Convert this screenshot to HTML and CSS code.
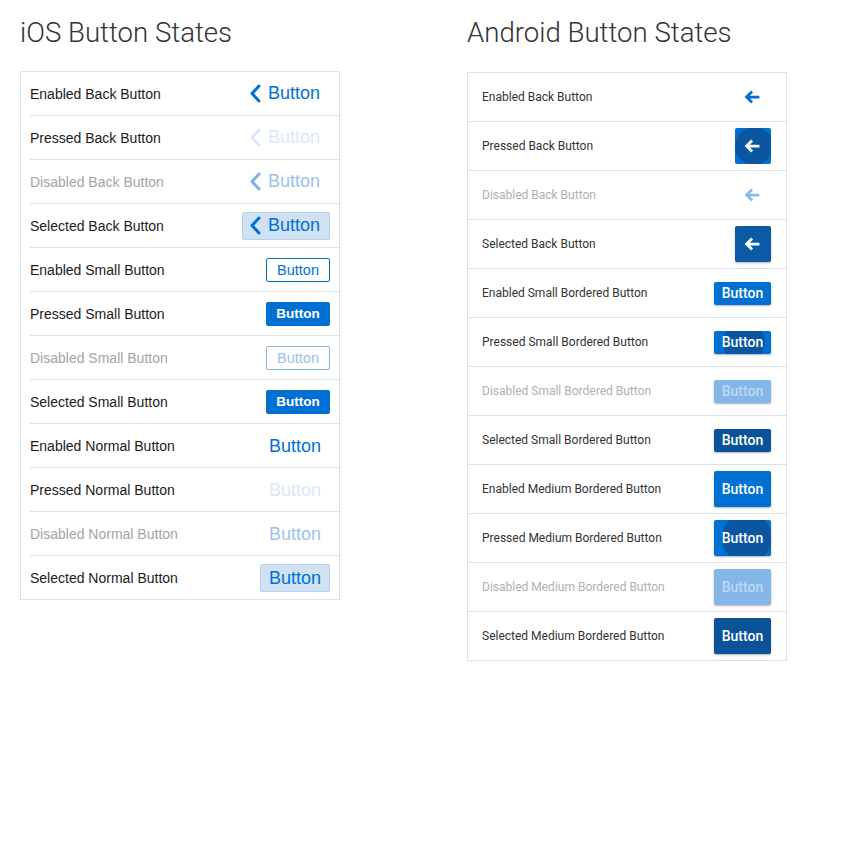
FILE: index.html
```html
<!DOCTYPE html>
<html lang="en">
<head>
    <meta charset="UTF-8">
    <title>Button States</title>
    <link rel="stylesheet" href="styles.css">
</head>
<body>
    <div class="page">

        <!-- iOS -->
        <section class="col ios">
            <h1>iOS Button States</h1>
            <div class="list">
                <div class="row"><span class="label">Enabled Back Button</span>
                    <span class="ios-back"><svg viewBox="0 0 13 19"><polyline points="10,2 3,9.5 10,17"/></svg>Button</span></div>
                <div class="row"><span class="label">Pressed Back Button</span>
                    <span class="ios-back pressed"><svg viewBox="0 0 13 19"><polyline points="10,2 3,9.5 10,17"/></svg>Button</span></div>
                <div class="row disabled"><span class="label">Disabled Back Button</span>
                    <span class="ios-back off"><svg viewBox="0 0 13 19"><polyline points="10,2 3,9.5 10,17"/></svg>Button</span></div>
                <div class="row"><span class="label">Selected Back Button</span>
                    <span class="ios-back selected"><svg viewBox="0 0 13 19"><polyline points="10,2 3,9.5 10,17"/></svg>Button</span></div>

                <div class="row"><span class="label">Enabled Small Button</span>
                    <span class="ios-small">Button</span></div>
                <div class="row"><span class="label">Pressed Small Button</span>
                    <span class="ios-small filled">Button</span></div>
                <div class="row disabled"><span class="label">Disabled Small Button</span>
                    <span class="ios-small off">Button</span></div>
                <div class="row"><span class="label">Selected Small Button</span>
                    <span class="ios-small filled">Button</span></div>

                <div class="row"><span class="label">Enabled Normal Button</span>
                    <span class="ios-normal">Button</span></div>
                <div class="row"><span class="label">Pressed Normal Button</span>
                    <span class="ios-normal pressed">Button</span></div>
                <div class="row disabled"><span class="label">Disabled Normal Button</span>
                    <span class="ios-normal off">Button</span></div>
                <div class="row"><span class="label">Selected Normal Button</span>
                    <span class="ios-normal selected">Button</span></div>
            </div>
        </section>

        <!-- Android -->
        <section class="col android">
            <h1>Android Button States</h1>
            <div class="list">
                <div class="row"><span class="label">Enabled Back Button</span>
                    <span class="and-back"><svg viewBox="0 0 24 24"><path d="M19 12H5M11 6l-6 6 6 6"/></svg></span></div>
                <div class="row"><span class="label">Pressed Back Button</span>
                    <span class="and-back boxed pressed"><svg viewBox="0 0 24 24"><path d="M19 12H5M11 6l-6 6 6 6"/></svg></span></div>
                <div class="row disabled"><span class="label">Disabled Back Button</span>
                    <span class="and-back off"><svg viewBox="0 0 24 24"><path d="M19 12H5M11 6l-6 6 6 6"/></svg></span></div>
                <div class="row"><span class="label">Selected Back Button</span>
                    <span class="and-back boxed selected"><svg viewBox="0 0 24 24"><path d="M19 12H5M11 6l-6 6 6 6"/></svg></span></div>

                <div class="row"><span class="label">Enabled Small Bordered Button</span>
                    <span class="and-btn">Button</span></div>
                <div class="row"><span class="label">Pressed Small Bordered Button</span>
                    <span class="and-btn pressed">Button</span></div>
                <div class="row disabled"><span class="label">Disabled Small Bordered Button</span>
                    <span class="and-btn off">Button</span></div>
                <div class="row"><span class="label">Selected Small Bordered Button</span>
                    <span class="and-btn selected">Button</span></div>

                <div class="row"><span class="label">Enabled Medium Bordered Button</span>
                    <span class="and-btn medium">Button</span></div>
                <div class="row"><span class="label">Pressed Medium Bordered Button</span>
                    <span class="and-btn medium pressed">Button</span></div>
                <div class="row disabled"><span class="label">Disabled Medium Bordered Button</span>
                    <span class="and-btn medium off">Button</span></div>
                <div class="row"><span class="label">Selected Medium Bordered Button</span>
                    <span class="and-btn medium selected">Button</span></div>
            </div>
        </section>

    </div>
</body>
</html>
```

FILE: styles.css
```css
body {
    margin: 0;
    background: #fff;
}

.page {
    display: flex;
    gap: 127px;
    padding: 0 20px;
}

.col {
    width: 320px;
}

h1 {
    margin: 17px 0 22px 0;
    font-family: Roboto, "Liberation Sans", sans-serif;
    font-weight: 300;
    font-size: 27.6px;
    line-height: 32px;
    color: #333;
}

.list {
    border: 1px solid #dbe2e9;
}

.row {
    display: flex;
    align-items: center;
    justify-content: space-between;
}

/* iOS */
.ios {
    font-family: "Liberation Sans", Arial, sans-serif;
}

.ios .row {
    height: 43px;
    margin-left: 9px;
    padding-right: 9px;
    border-bottom: 1px solid #dbe2e9;
}

.ios .row:last-child {
    border-bottom: none;
}

.ios .label {
    font-size: 14px;
    color: #1b1b1b;
}

.ios .disabled .label {
    color: #a4a4a4;
}

.ios-back {
    display: flex;
    align-items: center;
    gap: 6px;
    height: 26px;
    padding: 0 9px 0 6px;
    border: 1px solid transparent;
    border-radius: 2px;
    font-size: 18px;
    color: #0070d2;
}

.ios-back svg {
    width: 13px;
    height: 19px;
    fill: none;
    stroke: currentColor;
    stroke-width: 3;
    stroke-linecap: round;
    stroke-linejoin: round;
}

.ios-back.pressed {
    color: #dbe8f6;
}

.ios-back.off {
    color: #9cc1e9;
}

.ios-back.off svg {
    color: #80b1e4;
}

.ios-back.selected,
.ios-normal.selected {
    background: #cfe1f2;
    border-color: #b8d1ea;
}

.ios-small {
    box-sizing: border-box;
    width: 64px;
    height: 24px;
    line-height: 22px;
    text-align: center;
    font-size: 14.5px;
    color: #0070d2;
    border: 1px solid #0070d2;
    border-radius: 2px;
}

.ios-small.filled {
    background: #0070d2;
    color: #fff;
    font-size: 13.5px;
    font-weight: bold;
}

.ios-small.off {
    color: #9cc1e9;
    border-color: #8db8e6;
}

.ios-normal {
    height: 26px;
    line-height: 26px;
    padding: 0 8px;
    border: 1px solid transparent;
    border-radius: 2px;
    font-size: 18px;
    color: #0070d2;
}

.ios-normal.pressed {
    color: #dbe8f6;
}

.ios-normal.off {
    color: #a0c3ea;
}

/* Android */
.android {
    font-family: Roboto, sans-serif;
}

.android h1 {
    margin-bottom: 23px;
}

.android .row {
    height: 48px;
    padding: 0 15px 0 14px;
    border-bottom: 1px solid #dbe2e9;
}

.android .row:last-child {
    border-bottom: none;
}

.android .label {
    font-size: 12px;
    color: #333;
}

.android .disabled .label {
    color: #b0b0b0;
}

.and-back {
    display: flex;
    align-items: center;
    justify-content: center;
    width: 36px;
    height: 36px;
    color: #0070d2;
    position: relative;
    overflow: hidden;
    isolation: isolate;
    border-radius: 2px;
}

.and-back svg {
    width: 22px;
    height: 22px;
    fill: none;
    stroke: currentColor;
    stroke-width: 3;
}

.and-back.off {
    color: #8abbe9;
}

.and-back.boxed {
    color: #fff;
    background: #0070d2;
}

.and-back.selected {
    background: #0a5aa6;
    box-shadow: 0 1px 2px rgba(0, 0, 0, 0.3);
}

.and-back.pressed::before,
.and-btn.pressed::before {
    content: "";
    position: absolute;
    z-index: -1;
    left: 50%;
    top: 50%;
    width: 38px;
    height: 38px;
    margin: -19px 0 0 -18px;
    border-radius: 50%;
    background: #0a56a0;
}

.and-btn {
    position: relative;
    overflow: hidden;
    isolation: isolate;
    box-sizing: border-box;
    width: 57px;
    height: 23px;
    line-height: 23px;
    text-align: center;
    font-size: 14px;
    font-weight: 500;
    color: #fff;
    background: #0070d2;
    border-radius: 2px;
    box-shadow: 0 1px 2px rgba(0, 0, 0, 0.3);
}

.and-btn.medium {
    height: 36px;
    line-height: 36px;
}

.and-btn.pressed::before {
    width: 42px;
    height: 42px;
    margin: -21px 0 0 -20px;
}

.and-btn.medium.pressed::before {
    width: 50px;
    height: 50px;
    margin: -25px 0 0 -21px;
}

.and-btn.off {
    background: #84b7e8;
    color: #bcd8f3;
}

.and-btn.selected {
    background: #0a5399;
}
```
